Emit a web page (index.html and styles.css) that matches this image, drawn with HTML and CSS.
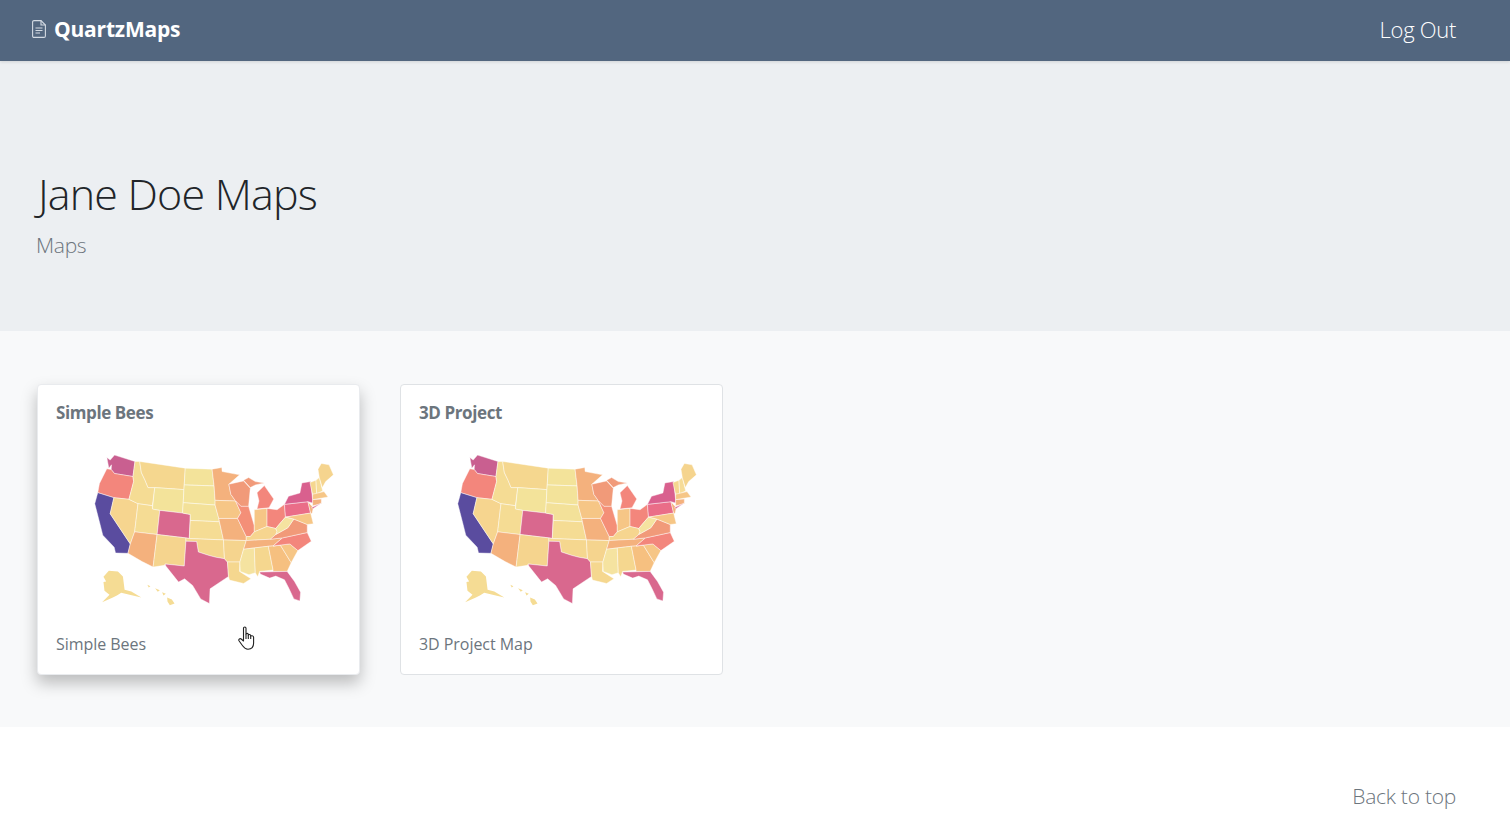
FILE: index.html
```html
<!DOCTYPE html>
<html lang="en">
<head>
<meta charset="UTF-8">
<meta name="viewport" content="width=device-width, initial-scale=1.0">
<title>QuartzMaps</title>
<link rel="stylesheet" href="styles.css">
</head>
<body>

<svg class="defs" width="0" height="0">
    <symbol id="us-map" viewBox="-69 -15 852 540">
        <g stroke="#fff" stroke-width="1.3" stroke-linejoin="round">
            <!-- west -->
            <path fill="#c95f90" d="M105 33 166 52 160 97 105 88 95 76 96 62 88 72 82 40 92 48Z"/>
            <path fill="#f3867c" d="M82 74 95 76 105 88 160 97 162 112 148 165 103 160 55 145 60 118Z"/>
            <path fill="#5a4c9f" d="M55 145 103 160 92 208 152 298 145 326 108 325 104 308 70 272 62 240 46 178Z"/>
            <path fill="#f6d58f" d="M103 160 148 165 175 178 165 262 152 298 92 208Z"/>
            <path fill="#f5dc94" d="M166 52 180 52 185 85 196 108 205 130 225 130 218 184 175 178 148 165 162 112 160 97Z"/>
            <path fill="#f5d78f" d="M180 52 316 72 312 136 225 130 205 130 196 108 185 85Z"/>
            <path fill="#f3e39a" d="M225 130 312 136 310 175 308 206 240 198 218 194Z"/>
            <path fill="#f5dc94" d="M175 178 218 184 218 194 240 198 232 270 165 262Z"/>
            <path fill="#d9688e" d="M240 198 308 206 331 210 328 282 318 280 232 270Z"/>
            <path fill="#f4b17d" d="M165 262 232 270 220 367 186 350 145 326 152 298Z"/>
            <path fill="#f5d48e" d="M232 270 318 280 318 290 313 364 256 358 254 362 220 367Z"/>
            <!-- plains -->
            <path fill="#f3e39a" d="M316 72 396 75 402 125 313 122Z"/>
            <path fill="#f3e39a" d="M313 122 402 125 405 168 405 182 310 175 312 136Z"/>
            <path fill="#f3e199" d="M310 175 405 182 416 222 418 232 331 228 331 210 308 206Z"/>
            <path fill="#f5dc94" d="M331 228 418 232 430 286 328 282Z"/>
            <path fill="#f5d78f" d="M318 280 328 282 430 286 433 342 408 338 385 332 355 322 350 291 318 290Z"/>
            <path fill="#d9688e" d="M318 290 350 291 355 322 385 332 408 338 433 342 442 352 445 395 390 432 388 476 362 462 338 422 314 402 296 412 258 364 256 358 313 364Z"/>
            <!-- midwest -->
            <path fill="#f4b17d" d="M396 75 425 70 426 82 478 92 446 120 452 150 466 170 405 168 402 125Z"/>
            <path fill="#f6c686" d="M405 168 466 170 482 205 472 222 416 222 405 182Z"/>
            <path fill="#f4b17d" d="M416 222 472 222 498 276 498 288 430 286 418 232Z"/>
            <path fill="#f5d48e" d="M430 286 498 288 490 314 479 352 442 352 433 342Z"/>
            <path fill="#f5d78f" d="M442 352 479 352 478 380 512 402 490 416 448 406 445 395Z"/>
            <path fill="#f19a79" d="M446 120 490 110 510 132 505 186 482 186 466 170 452 150Z"/>
            <path fill="#f48f78" d="M466 170 482 186 505 186 522 244 522 262 510 276 498 276 472 222 482 205Z"/>
            <path fill="#f19a79" d="M490 108 505 100 525 112 552 116 525 122 510 130Z"/>
            <path fill="#f3867c" d="M530 145 552 124 580 164 566 190 530 194 536 170Z"/>
            <path fill="#f6c686" d="M522 196 560 192 560 246 522 262 522 244Z"/>
            <path fill="#f3867c" d="M560 192 590 196 612 180 615 218 596 240 586 252 560 246Z"/>
            <!-- south -->
            <path fill="#f6d58f" d="M498 288 498 276 510 276 522 262 560 246 586 252 590 262 586 270 570 284Z"/>
            <path fill="#f4b17d" d="M498 288 570 284 606 280 578 304 564 305 522 310 490 314Z"/>
            <path fill="#f5e3a0" d="M490 314 522 310 525 384 506 390 480 380 479 352Z"/>
            <path fill="#f5d78f" d="M522 310 564 305 578 376 538 380 532 396 525 384Z"/>
            <path fill="#f6c080" d="M564 305 578 304 600 302 632 354 620 380 578 380 578 376Z"/>
            <path fill="#d9688e" d="M538 382 620 380 642 410 660 442 658 468 640 462 625 430 612 405 586 394 568 400 540 388Z"/>
            <path fill="#f6c686" d="M578 304 628 298 652 318 632 354 600 302Z"/>
            <path fill="#f3867c" d="M578 304 606 280 680 264 692 290 652 318 628 298Z"/>
            <path fill="#f19a79" d="M570 284 586 270 622 250 640 224 680 240 680 264 606 280Z"/>
            <path fill="#f5e3a0" d="M586 270 590 262 586 252 596 240 615 218 640 224 622 250Z"/>
            <!-- northeast -->
            <path fill="#ea6d88" d="M612 180 682 172 690 206 615 218Z"/>
            <path fill="#d9608e" d="M624 156 658 146 664 116 690 112 696 166 696 176 682 172 612 180Z"/>
            <path fill="#f4b17d" d="M682 172 698 190 694 208 690 206Z"/>
            <path fill="#f6c686" d="M615 218 690 206 698 238 680 240 640 224Z"/>
            <path fill="#f5d78f" d="M688 115 706 108 708 148 696 150Z"/>
            <path fill="#f6dc98" d="M706 108 716 100 726 140 708 148Z"/>
            <path fill="#f5d48e" d="M712 75 722 58 745 62 758 92 735 112 725 130 716 100Z"/>
            <path fill="#f6c686" d="M696 150 730 142 742 158 696 166Z"/>
            <path fill="#f4b17d" d="M696 166 722 164 722 178 696 184Z"/>
            <path fill="#d9608e" d="M692 190 722 176 698 192Z"/>
        </g>
        <!-- alaska and hawaii -->
        <path fill="#f5dc94" d="M88 378 115 380 130 395 135 435 155 440 185 458 150 450 125 444 112 452 100 458 68 472 90 450 75 438 72 412 80 410 72 396Z"/>
        <path fill="#f5dc94" d="M262 458 276 464 284 476 270 481 263 470ZM226 430 240 436 234 441ZM247 442 258 447 251 452ZM203 420 212 424 207 428Z"/>
    </symbol>
</svg>

<nav class="topbar">
    <a class="brand" href="#">
        <svg class="brand-icon" viewBox="0 0 14 18" width="14" height="18" fill="none" stroke="#d3dae3" stroke-width="1.1">
            <path d="M2 .6H9L13.4 5V16A1.4 1.4 0 0 1 12 17.4H2A1.4 1.4 0 0 1 .6 16V2A1.4 1.4 0 0 1 2 .6Z"/>
            <path d="M9 .6V5H13.4M3.5 8H10.5M3.5 10.5H10.5M3.5 13H8"/>
        </svg>
        QuartzMaps
    </a>
    <a class="logout" href="#">Log Out</a>
</nav>

<header class="hero">
    <h1>Jane Doe Maps</h1>
    <p>Maps</p>
</header>

<main class="gallery">
    <a class="card card-hover" href="#">
        <h2>Simple Bees</h2>
        <svg class="thumb"><use href="#us-map"/></svg>
        <p>Simple Bees</p>
    </a>
    <a class="card" href="#">
        <h2>3D Project</h2>
        <svg class="thumb"><use href="#us-map"/></svg>
        <p>3D Project Map</p>
    </a>
</main>

<footer class="page-foot">
    <a href="#">Back to top</a>
</footer>

<!-- mouse pointer from the capture -->
<svg class="pointer" viewBox="0 0 18 24" width="18" height="24" fill="#fff" stroke="#222" stroke-width="1.1" stroke-linejoin="round">
    <path d="M5.5 15V2.2C5.5.6 8 .6 8 2.2V8.5C8 7 10.3 7 10.3 8.6V9.5C10.3 8.2 12.7 8.2 12.7 9.8V10.5C12.7 9.3 15.6 9.4 15.6 11.2V17C15.6 20.5 13.6 23.2 10 23.2 7 23.2 5.8 21.5 4.6 19.8L1 14.8C.2 13.4 2 12 3.2 13Z"/>
    <path d="M8 8.5V13M10.3 9.5V13M12.7 10.5V13" fill="none"/>
</svg>

</body>
</html>
```
FILE: styles.css
```css
html, body {
    height: 100%;
}
body {
    margin: 0;
    font-family: "Open Sans", "Noto Sans", sans-serif;
    background-color: #fff;
    color: #212529;
    overflow: hidden;
}
a {
    text-decoration: none;
    color: inherit;
}
.defs {
    position: absolute;
}
.topbar {
    display: flex;
    justify-content: space-between;
    align-items: center;
    height: 61px;
    box-sizing: border-box;
    padding: 0 54px 4px 32px;
    background-color: #52667f;
    color: #fff;
    position: relative;
    box-shadow: 0 1px 3px rgba(0,0,0,0.12);
}
.brand {
    display: flex;
    align-items: center;
    gap: 8px;
    font-size: 21px;
    font-weight: 700;
    letter-spacing: -0.2px;
}
.logout {
    font-size: 22px;
    font-weight: 300;
    letter-spacing: -0.3px;
}
.hero {
    height: 270px;
    box-sizing: border-box;
    padding: 106px 36px 0;
    background-color: #eceff2;
}
.hero h1 {
    margin: 0 0 0 2px;
    font-size: 43px;
    line-height: 54px;
    font-weight: 300;
    letter-spacing: -0.8px;
}
.hero p {
    margin: 10px 0 0;
    font-size: 21px;
    line-height: 28px;
    font-weight: 300;
    color: #6c757d;
    letter-spacing: -0.3px;
}
.gallery {
    display: flex;
    gap: 40px;
    height: 396px;
    box-sizing: border-box;
    padding: 53px 37px;
    background-color: #f8f9fa;
}
.card {
    display: block;
    width: 323px;
    height: 291px;
    box-sizing: border-box;
    padding: 18px;
    background-color: #fff;
    border: 1px solid #dfe2e5;
    border-radius: 4px;
    color: #6c757d;
}
.card-hover {
    border-color: #e9ebee;
    box-shadow: 0 8px 16px rgba(0,0,0,0.25);
}
.card h2 {
    margin: 0;
    font-size: 17px;
    line-height: 20px;
    font-weight: 700;
    letter-spacing: -0.4px;
}
.thumb {
    display: block;
    width: 286px;
    height: 181px;
    margin-top: 16px;
}
.card p {
    margin: 14px 0 0;
    font-size: 16px;
    line-height: 20px;
    font-weight: 500;
    letter-spacing: -0.05px;
}
.page-foot {
    display: flex;
    justify-content: flex-end;
    padding: 55px 54px 0;
    font-size: 21px;
    line-height: 28px;
    font-weight: 300;
    color: #6c757d;
    letter-spacing: -0.25px;
}
.pointer {
    position: absolute;
    left: 238px;
    top: 626px;
}
```
